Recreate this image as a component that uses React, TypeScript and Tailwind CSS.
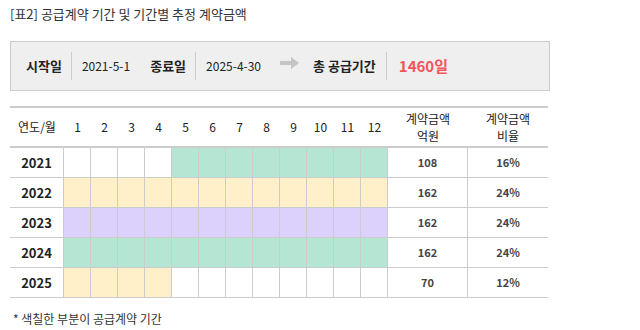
import React from "react";

const GREEN = "bg-[#b5e6d4]";
const YELLOW = "bg-[#fff0c9]";
const PURPLE = "bg-[#dcd1fd]";

type Row = { year: string; cells: string[]; amount: string; ratio: string };

const rows: Row[] = [
  { year: "2021", cells: [...Array(4).fill("bg-white"), ...Array(8).fill(GREEN)], amount: "108", ratio: "16%" },
  { year: "2022", cells: Array(12).fill(YELLOW), amount: "162", ratio: "24%" },
  { year: "2023", cells: Array(12).fill(PURPLE), amount: "162", ratio: "24%" },
  { year: "2024", cells: Array(12).fill(GREEN), amount: "162", ratio: "24%" },
  { year: "2025", cells: [...Array(4).fill(YELLOW), ...Array(8).fill("bg-white")], amount: "70", ratio: "12%" },
];

function Arrow() {
  return (
    <svg width="19" height="12" viewBox="0 0 19 12" className="block">
      <path d="M0 4 H11 V0 L19 6 L11 12 V8 H0 Z" fill="#c4c4c4" />
    </svg>
  );
}

export default function App() {
  return (
    <div
      className="w-[640px] h-[330px] bg-white px-[10px] pt-[6px] text-[#333]"
      style={{ fontFamily: '"Noto Sans CJK KR", "Noto Sans", sans-serif' }}
    >
      <div className="text-[13px] leading-[16px] h-[16px]">[표2] 공급계약 기간 및 기간별 추정 계약금액</div>

      <div className="mt-[19px] w-[540px] h-[50px] border border-[#cccccc] bg-[#efefef] flex items-center pl-[15px] text-[#222]">
        <span className="text-[13px] font-bold leading-[18px]">시작일</span>
        <span className="ml-[9px] w-px h-[28px] bg-[#cccccc]" />
        <span className="ml-[10px] text-[12px] leading-[18px]">2021-5-1</span>
        <span className="ml-[20px] text-[13px] font-bold leading-[18px]">종료일</span>
        <span className="ml-[9px] w-px h-[28px] bg-[#cccccc]" />
        <span className="ml-[10px] text-[12px] leading-[18px]">2025-4-30</span>
        <span className="ml-[19px] -mt-[6px]">
          <Arrow />
        </span>
        <span className="ml-[14px] text-[13px] font-bold leading-[18px]">총 공급기간</span>
        <span className="ml-[10px] w-px h-[28px] bg-[#cccccc]" />
        <span className="ml-[12px] text-[15px] font-bold leading-[18px] text-[#f2555a]">1460일</span>
      </div>

      <div className="mt-[15px] w-[538px]">
        <div className="flex h-[42px] border-t-2 border-b-2 border-[#cccccc] items-center text-[12px] text-[#222]">
          <div className="w-[54px] text-center">연도/월</div>
          {Array.from({ length: 12 }, (_, i) => (
            <div key={i} className="w-[27px] text-center">
              {i + 1}
            </div>
          ))}
          <div className="w-[80px] text-center leading-[17px]">
            계약금액
            <br />
            억원
          </div>
          <div className="w-[80px] text-center leading-[17px]">
            계약금액
            <br />
            비율
          </div>
        </div>
        {rows.map((r) => (
          <div key={r.year} className="flex h-[30px] border-b border-[#cccccc]">
            <div className="w-[54px] border-r border-[#cccccc] flex items-center justify-center text-[13px] font-bold text-[#222]">
              {r.year}
            </div>
            {r.cells.map((c, i) => (
              <div key={i} className={`w-[27px] border-r border-[#cccccc] ${c}`} />
            ))}
            <div className="w-[80px] border-r border-[#cccccc] flex items-center justify-center text-[11px] font-bold text-[#444]">
              {r.amount}
            </div>
            <div className="w-[80px] flex items-center justify-center text-[11px] font-bold text-[#444]">
              {r.ratio}
            </div>
          </div>
        ))}
      </div>

      <div className="mt-[14px] ml-[3px] text-[12px] leading-[14px] text-[#333]">* 색칠한 부분이 공급계약 기간</div>
    </div>
  );
}
